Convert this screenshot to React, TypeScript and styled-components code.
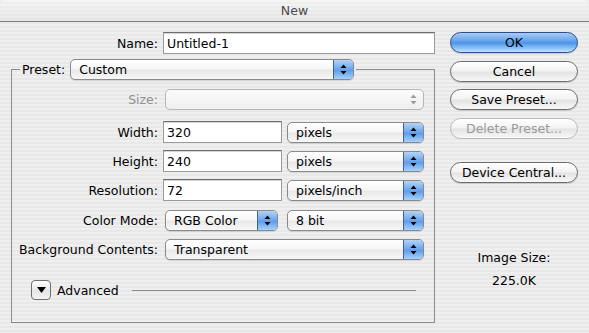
import React, { FunctionComponent } from 'react';
import styled, { createGlobalStyle, css } from 'styled-components';

const GlobalStyle = createGlobalStyle`
    html, body {
        margin: 0;
        padding: 0;
        background: #ececec;
    }

    body {
        font-family: "DejaVu Sans", "Liberation Sans", sans-serif;
        font-size: 12.5px;
        color: #000;
    }
`;

const PINSTRIPE = 'repeating-linear-gradient(to bottom, #efefef 0, #efefef 2px, #e8e8e8 2px, #e8e8e8 4px)';

const StyledWindow = styled.div`
    width: 589px;
    height: 333px;
    display: flex;
    flex-direction: column;
    background: ${PINSTRIPE};
    border-radius: 6px 6px 0 0;
    overflow: hidden;
`;

const StyledTitleBar = styled.div`
    height: 22px;
    flex: none;
    display: flex;
    align-items: center;
    justify-content: center;
    border-bottom: 1px solid #7c7c7c;
    background:
        linear-gradient(to bottom, rgba(255, 255, 255, 0.35), rgba(0, 0, 0, 0.02)),
        ${PINSTRIPE};
    font-size: 12.5px;
    color: #4a4a4a;
    box-sizing: border-box;
`;

const StyledBody = styled.div`
    flex: 1;
    display: flex;
    padding: 10px 11px 0 11px;
    gap: 15px;
`;

const StyledFormColumn = styled.div`
    width: 424px;
    display: flex;
    flex-direction: column;
    gap: 5px;
`;

const StyledRow = styled.div<{ $label: number; $top?: number }>`
    display: grid;
    grid-template-columns: ${({ $label }) => $label}px auto;
    align-items: center;
    column-gap: 5px;
    margin-top: ${({ $top }) => $top || 0}px;
`;

const StyledLabel = styled.label<{ $disabled?: boolean }>`
    text-align: right;
    white-space: nowrap;
    color: ${({ $disabled }) => ($disabled ? '#8f8f8f' : '#000')};
`;

const StyledControls = styled.div<{ $gap?: number }>`
    display: flex;
    align-items: center;
    gap: ${({ $gap }) => $gap ?? 3}px;
`;

const StyledInput = styled.div<{ $width: number }>`
    width: ${({ $width }) => $width}px;
    height: 22px;
    box-sizing: border-box;
    background: #fff;
    border: 1px solid #9a9a9a;
    border-top-color: #6e6e6e;
    box-shadow: inset 0 1px 0 #d4d4d4;
    display: flex;
    align-items: center;
    padding-left: 3px;
`;

const StyledFieldset = styled.fieldset`
    margin: 0;
    width: 424px;
    height: 264px;
    box-sizing: border-box;
    border: 1px solid #8c8c8c;
    padding: 9px 0 0 0;
    display: flex;
    flex-direction: column;
    gap: 7px;
`;

const StyledLegend = styled.legend`
    margin-left: 8px;
    padding: 0 2px 0 2px;
    display: flex;
    align-items: center;
    gap: 3px;
`;

const StyledPopup = styled.div<{ $width: number; $disabled?: boolean }>`
    width: ${({ $width }) => $width}px;
    height: 21px;
    box-sizing: border-box;
    margin-left: 2px;
    border: 1px solid #8a8a8a;
    border-radius: 5px;
    background: linear-gradient(to bottom, #ffffff 0%, #f6f6f6 45%, #e9e9e9 55%, #f7f7f7 100%);
    box-shadow: 0 1px 1px rgba(0, 0, 0, 0.12);
    display: flex;
    align-items: center;
    padding-left: 8px;
    overflow: hidden;

    ${({ $disabled }) => $disabled && css`
        border-color: #b7b7b7;
        background: linear-gradient(to bottom, #fbfbfb, #efefef);
        box-shadow: none;
    `}
`;

const StyledPopupArrows = styled.span<{ $disabled?: boolean }>`
    margin-left: auto;
    width: 19px;
    height: 100%;
    flex: none;
    display: flex;
    align-items: center;
    justify-content: center;
    border-left: 1px solid #3d62a3;
    background: linear-gradient(to bottom, #b5d3f6 0%, #78aeee 40%, #5f9de9 55%, #a6d2fb 100%);

    ${({ $disabled }) => $disabled && css`
        border-left: none;
        background: transparent;
    `}
`;

const StyledButton = styled.div<{ $default?: boolean; $disabled?: boolean }>`
    width: 128px;
    height: 21px;
    box-sizing: border-box;
    border-radius: 11px;
    border: 1px solid #6c6c6c;
    background: linear-gradient(to bottom, #ffffff 0%, #f3f3f3 45%, #e4e4e4 55%, #f8f8f8 100%);
    box-shadow: 0 1px 1px rgba(0, 0, 0, 0.15);
    display: flex;
    align-items: center;
    justify-content: center;
    white-space: nowrap;

    ${({ $default }) => $default && css`
        border-color: #2d4e8c;
        background: linear-gradient(to bottom, #a9cbf3 0%, #6aa5ec 40%, #4d93e6 52%, #8ac4f8 80%, #c2e4ff 100%);
    `}

    ${({ $disabled }) => $disabled && css`
        border-color: #b9b9b9;
        color: #9a9a9a;
        box-shadow: none;
    `}
`;

const StyledButtonColumn = styled.div`
    width: 128px;
    display: flex;
    flex-direction: column;
    align-items: center;
    gap: 7.5px;
`;

const StyledSpacer = styled.div<{ $height: number }>`
    height: ${({ $height }) => $height}px;
`;

const StyledImageSize = styled.div`
    margin-top: 60px;
    display: flex;
    flex-direction: column;
    align-items: center;
    gap: 8px;
`;

const StyledAdvanced = styled.div`
    margin-top: 13px;
    padding-left: 19px;
    display: flex;
    align-items: center;
    gap: 6px;
`;

const StyledDisclosure = styled.div`
    width: 20px;
    height: 20px;
    box-sizing: border-box;
    border: 1px solid #6f6f6f;
    border-radius: 4px;
    background: linear-gradient(to bottom, #ffffff, #e6e6e6 55%, #f4f4f4);
    display: flex;
    align-items: center;
    justify-content: center;
`;

const StyledRule = styled.div`
    flex: 1;
    height: 1px;
    background: #8c8c8c;
    margin: 0 18px 0 7px;
`;

const Arrows: FunctionComponent<{ disabled?: boolean }> = ({ disabled }) => (
    <svg width="7" height="11" viewBox="0 0 7 11">
        <path d="M3.5 0.5 L6.5 4 L0.5 4 Z" fill={disabled ? '#9a9a9a' : '#000'} />
        <path d="M3.5 10.5 L6.5 7 L0.5 7 Z" fill={disabled ? '#9a9a9a' : '#000'} />
    </svg>
);

interface IPopup {
    readonly width: number;
    readonly value?: string;
    readonly disabled?: boolean;
}

const Popup: FunctionComponent<IPopup> = ({ width, value, disabled }) => (
    <StyledPopup $width={width} $disabled={disabled}>
        {value}
        <StyledPopupArrows $disabled={disabled}>
            <Arrows disabled={disabled} />
        </StyledPopupArrows>
    </StyledPopup>
);

const sizeRows = [
    { label: 'Width:', value: '320', unit: 'pixels', top: 4 },
    { label: 'Height:', value: '240', unit: 'pixels', top: 0 },
    { label: 'Resolution:', value: '72', unit: 'pixels/inch', top: 0 }
];

const App: FunctionComponent = () => {
    return (
        <>
            <GlobalStyle />
            <StyledWindow>
                <StyledTitleBar>New</StyledTitleBar>
                <StyledBody>
                    <StyledFormColumn>
                        <StyledRow $label={147}>
                            <StyledLabel>Name:</StyledLabel>
                            <StyledInput $width={272}>Untitled-1</StyledInput>
                        </StyledRow>
                        <StyledFieldset>
                            <StyledLegend>
                                <span>Preset:</span>
                                <Popup width={284} value="Custom" />
                            </StyledLegend>
                            <StyledRow $label={146}>
                                <StyledLabel $disabled>Size:</StyledLabel>
                                <StyledControls>
                                    <Popup width={259} disabled />
                                </StyledControls>
                            </StyledRow>
                            {
                                sizeRows.map((row) => {
                                    return (
                                        <StyledRow $label={146} $top={row.top} key={row.label}>
                                            <StyledLabel>{row.label}</StyledLabel>
                                            <StyledControls>
                                                <StyledInput $width={119}>{row.value}</StyledInput>
                                                <Popup width={137} value={row.unit} />
                                            </StyledControls>
                                        </StyledRow>
                                    );
                                })
                            }
                            <StyledRow $label={146} $top={2}>
                                <StyledLabel>Color Mode:</StyledLabel>
                                <StyledControls $gap={7}>
                                    <Popup width={113} value="RGB Color" />
                                    <Popup width={137} value="8 bit" />
                                </StyledControls>
                            </StyledRow>
                            <StyledRow $label={146} $top={1}>
                                <StyledLabel>Background Contents:</StyledLabel>
                                <StyledControls>
                                    <Popup width={259} value="Transparent" />
                                </StyledControls>
                            </StyledRow>
                            <StyledAdvanced>
                                <StyledDisclosure>
                                    <svg width="9" height="6" viewBox="0 0 9 6">
                                        <path d="M0 0 L9 0 L4.5 6 Z" fill="#000" />
                                    </svg>
                                </StyledDisclosure>
                                <span>Advanced</span>
                                <StyledRule />
                            </StyledAdvanced>
                        </StyledFieldset>
                    </StyledFormColumn>
                    <StyledButtonColumn>
                        <StyledButton $default>OK</StyledButton>
                        <StyledButton>Cancel</StyledButton>
                        <StyledButton>Save Preset...</StyledButton>
                        <StyledButton $disabled>Delete Preset...</StyledButton>
                        <StyledSpacer $height={8} />
                        <StyledButton>Device Central...</StyledButton>
                        <StyledImageSize>
                            <span>Image Size:</span>
                            <span>225.0K</span>
                        </StyledImageSize>
                    </StyledButtonColumn>
                </StyledBody>
            </StyledWindow>
        </>
    );
};

export default App;
